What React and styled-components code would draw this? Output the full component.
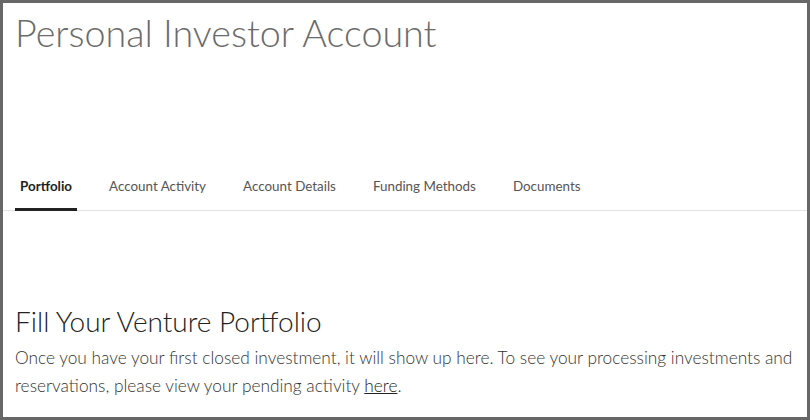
import React from "react";
import styled, { createGlobalStyle } from "styled-components";

const GlobalStyle = createGlobalStyle`
  html, body {
    margin: 0;
    padding: 0;
    background: #ffffff;
  }
  body {
    font-family: "Lato", "Open Sans", sans-serif;
  }
`;

const Frame = styled.div`
  box-sizing: border-box;
  width: 810px;
  height: 420px;
  border: 3px solid #676767;
  background: #fff;
  overflow: hidden;
`;

const Title = styled.h1`
  margin: 0;
  padding: 6px 0 0 12px;
  font-size: 37.7px;
  line-height: 48px;
  font-weight: 300;
  color: #6b6b6b;
`;

const Tabs = styled.ul`
  display: flex;
  gap: 27px;
  list-style: none;
  margin: 116px 0 0 0;
  padding: 0 0 0 12px;
  border-bottom: 1px solid #e3e3e3;
`;

const Tab = styled.li`
  padding: 0 5px;
  height: 35px;
  line-height: 27px;
  font-size: 13.4px;
  font-weight: ${(p) => (p.$active ? 700 : 400)};
  color: ${(p) => (p.$active ? "#1e1e1e" : "#555")};
  border-bottom: 3px solid ${(p) => (p.$active ? "#222" : "transparent")};
  margin-bottom: -1px;
  cursor: pointer;
`;

const Content = styled.section`
  padding: 92px 12px 0 12px;
`;

const Heading = styled.h2`
  margin: 0;
  font-size: 28px;
  line-height: 36px;
  font-weight: 300;
  color: #222;
`;

const Text = styled.p`
  margin: 5px 0 0 0;
  font-size: 17.3px;
  line-height: 28px;
  font-weight: 300;
  color: #333;
`;

const Link = styled.a`
  color: #222;
  text-decoration: underline;
`;

const tabs = ["Portfolio", "Account Activity", "Account Details", "Funding Methods", "Documents"];

export default function App() {
  return (
    <>
      <GlobalStyle />
      <Frame>
        <Title>Personal Investor Account</Title>
        <Tabs>
          {tabs.map((t, i) => (
            <Tab key={t} $active={i === 0}>
              {t}
            </Tab>
          ))}
        </Tabs>
        <Content>
          <Heading>Fill Your Venture Portfolio</Heading>
          <Text>
            Once you have your first closed investment, it will show up here. To see your processing
            investments and reservations, please view your pending activity <Link href="#">here</Link>.
          </Text>
        </Content>
      </Frame>
    </>
  );
}
